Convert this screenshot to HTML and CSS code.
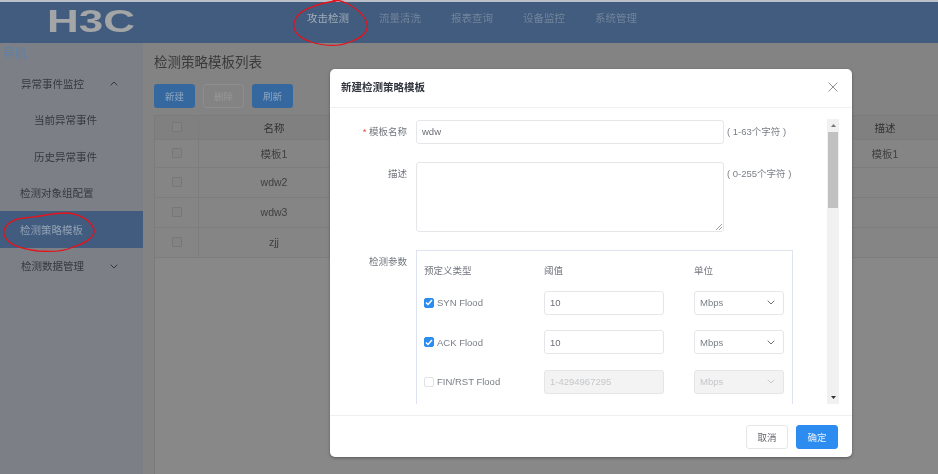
FILE: index.html
```html
<!DOCTYPE html>
<html lang="zh">
<head>
<meta charset="utf-8">
<title>检测策略模板</title>
<link rel="stylesheet" href="styles.css">
</head>
<body>
<div class="app">
  <header class="topbar">
    <svg class="logo" width="88" height="26" viewBox="0 0 88 26"><text x="0" y="24" textLength="88" lengthAdjust="spacingAndGlyphs" class="logo-text">H3C</text></svg>
    <nav class="mainnav">
      <span>攻击检测</span><span>流量清洗</span><span>报表查询</span><span>设备监控</span><span>系统管理</span>
    </nav>
  </header>
  <div class="main">
    <aside class="sidebar">
      <div class="side-title">导航</div>
      <div class="side-item lvl1">异常事件监控<svg class="chev" width="8" height="5" viewBox="0 0 8 5"><path d="M.7 4.3 4 1l3.3 3.3"/></svg></div>
      <div class="side-item lvl2">当前异常事件</div>
      <div class="side-item lvl2">历史异常事件</div>
      <div class="side-item lvl0">检测对象组配置</div>
      <div class="side-item lvl0 active">检测策略模板</div>
      <div class="side-item lvl1">检测数据管理<svg class="chev" width="8" height="5" viewBox="0 0 8 5"><path d="M.7.7 4 4 7.3.7"/></svg></div>
    </aside>
    <section class="content">
      <h1 class="page-title">检测策略模板列表</h1>
      <div class="toolbar">
        <span class="tbtn primary">新建</span><span class="tbtn disabled">删除</span><span class="tbtn primary">刷新</span>
      </div>
      <div class="table">
        <div class="tr th"><span class="c-check"><i class="tick"></i></span><span class="c-name">名称</span><span class="c-fill"></span><span class="c-desc">描述</span></div>
        <div class="tr r1"><span class="c-check"><i class="tick"></i></span><span class="c-name">模板1</span><span class="c-fill"></span><span class="c-desc">模板1</span></div>
        <div class="tr r2"><span class="c-check"><i class="tick"></i></span><span class="c-name">wdw2</span><span class="c-fill"></span><span class="c-desc"></span></div>
        <div class="tr r2"><span class="c-check"><i class="tick"></i></span><span class="c-name">wdw3</span><span class="c-fill"></span><span class="c-desc"></span></div>
        <div class="tr r2"><span class="c-check"><i class="tick"></i></span><span class="c-name">zjj</span><span class="c-fill"></span><span class="c-desc"></span></div>
      </div>
    </section>
  </div>
</div>

<div class="modal">
  <div class="modal-head">
    <span class="modal-title">新建检测策略模板</span>
    <svg class="close" width="10" height="10" viewBox="0 0 10 10"><path d="M.5.5l9 9M9.500.5l-9 9"/></svg>
  </div>
  <div class="modal-body">
    <form class="form">
      <div class="frow name-row">
        <label class="flabel"><em>*</em> 模板名称</label>
        <div class="finput">wdw</div>
        <span class="hint">( 1-63个字符 )</span>
      </div>
      <div class="frow desc-row">
        <label class="flabel">描述</label>
        <div class="ftext"><svg class="grip" width="7" height="7" viewBox="0 0 7 7"><path d="M1 7l6-6M4 7l3-3"/></svg></div>
        <span class="hint">( 0-255个字符 )</span>
      </div>
      <div class="frow param-row">
        <label class="flabel">检测参数</label>
        <div class="params">
          <div class="pgrid phead"><span>预定义类型</span><span>阈值</span><span>单位</span></div>
          <div class="pgrid">
            <span class="ck on"><i class="box"><svg width="8" height="7" viewBox="0 0 8 7"><path d="M1 3.500 3 5.500 7 1"/></svg></i>SYN Flood</span>
            <span class="pinput">10</span>
            <span class="pselect">Mbps<svg width="8" height="5" viewBox="0 0 8 5"><path d="M.7.7 4 4 7.300.7"/></svg></span>
          </div>
          <div class="pgrid">
            <span class="ck on"><i class="box"><svg width="8" height="7" viewBox="0 0 8 7"><path d="M1 3.500 3 5.500 7 1"/></svg></i>ACK Flood</span>
            <span class="pinput">10</span>
            <span class="pselect">Mbps<svg width="8" height="5" viewBox="0 0 8 5"><path d="M.7.7 4 4 7.300.7"/></svg></span>
          </div>
          <div class="pgrid">
            <span class="ck"><i class="box"></i>FIN/RST Flood</span>
            <span class="pinput off">1-4294967295</span>
            <span class="pselect off">Mbps<svg width="8" height="5" viewBox="0 0 8 5"><path d="M.7.7 4 4 7.300.7"/></svg></span>
          </div>
        </div>
      </div>
    </form>
    <div class="scrollbar">
      <svg class="arrow" width="5" height="3" viewBox="0 0 5 3"><path d="M2.500 0 5 3H0z"/></svg>
      <div class="thumb"></div>
      <svg class="arrow down" width="5" height="3" viewBox="0 0 5 3"><path d="M0 0h5L2.500 3z"/></svg>
    </div>
  </div>
  <div class="modal-foot">
    <span class="mbtn">取消</span><span class="mbtn ok">确定</span>
  </div>
</div>

<svg class="marks" width="938" height="474" viewBox="0 0 938 474">
  <path d="M336 1C320 3 301 9 296 18 290 28 296 37 311 42 324 46 338 47 350 42 361 38 369 33 367 24 365 15 356 8 346 3 342 1 338 0 333 0"/>
  <path d="M40 216C50 214 60 213 67 213 78 214 90 219 94 229 96 237 84 244 73 247 63 252 50 252 38 251 24 249 8 246 4 235 2 226 12 219 24 218 30 217 35 217 40 216"/>
</svg>
</body>
</html>
```
FILE: styles.css
```css
* { box-sizing: border-box; }
html, body { margin: 0; height: 100%; }
body {
  width: 938px;
  height: 474px;
  overflow: hidden;
  position: relative;
  background: #808080;
  font-family: "Liberation Sans", "Noto Sans CJK SC", sans-serif;
  font-size: 10.5px;
  color: #5b5f66;
}
.app { height: 474px; display: flex; flex-direction: column; border-top: 2px solid #b9c0c8; filter: blur(.35px); }
.topbar { height: 41px; background: #415c7e; display: flex; flex: none; align-items: flex-start; }
.logo { margin: 6px 0 0 47px; flex: none; overflow: visible; }
.logo-text { font: bold 30.500px "Liberation Sans", sans-serif; fill: #a3a5a6; }
.mainnav { margin: 9px 0 0 172px; display: flex; gap: 30px; color: #73849b; line-height: 14px; }
.mainnav span { width: 42px; white-space: nowrap; }
.mainnav span:first-child { color: #a3adb9; }
.main { flex: 1; display: flex; min-height: 0; }

.sidebar { width: 143px; flex: none; background: #7c8086; color: #35383d; }
.side-title { color: #5e7fa8; font-size: 12px; line-height: 16px; padding: 3px 0 0 3px; height: 22px; }
.side-item { height: 36.500px; display: flex; align-items: center; position: relative; white-space: nowrap; }
.side-item.lvl1 { padding-left: 21px; }
.side-item.lvl2 { padding-left: 34px; }
.side-item.lvl0 { padding-left: 20px; }
.side-item.active { background: #415c7e; color: #92a1b4; }
.chev { position: absolute; left: 110px; top: 16px; fill: none; stroke: #33363a; stroke-width: 1; }

.content { flex: 1; min-width: 0; padding: 10px 0 0 11px; background: #838383; color: #3f3f3f; display: flex; flex-direction: column; }
.page-title { margin: 0; font-size: 13.500px; font-weight: 400; line-height: 20px; color: #3a3a3a; }
.toolbar { display: flex; gap: 8px; margin-top: 11px; }
.tbtn { width: 41px; height: 24px; border-radius: 3px; display: flex; align-items: center; justify-content: center; font-size: 9.500px; }
.tbtn.primary { background: #35689f; color: #8ea6c0; }
.tbtn.disabled { border: 1px solid #8d8d8d; color: #979797; }
.table { margin-top: 7px; flex: 1; border-top: 1px solid #7b7b7b; border-left: 1px solid #7b7b7b; background: #888; }
.tr { display: flex; align-items: stretch; border-bottom: 1px solid #7d7d7d; background: #858585; }
.tr.th { height: 24px; background: #808080; color: #323232; }
.tr.r1 { height: 28px; }
.tr.r2 { height: 30px; }
.tr span { display: flex; align-items: center; justify-content: center; padding-bottom: 1px; }
.c-check { width: 44px; border-right: 1px solid #7d7d7d; }
.c-name { width: 150px; }
.c-fill { flex: 1; }
.c-desc { width: 106px; }
.tick { width: 10px; height: 10px; border: 1px solid #777; border-radius: 1px; background: #838383; }

.modal {
  position: absolute;
  left: 330px;
  top: 69px;
  width: 522px;
  height: 388px;
  background: #fff;
  border-radius: 5px;
  box-shadow: 0 1px 3px rgba(0,0,0,.35);
  display: flex;
  flex-direction: column;
  filter: blur(.35px);
}
.modal-head { height: 39px; flex: none; border-bottom: 1px solid #eef0f2; display: flex; align-items: center; justify-content: space-between; padding: 0 14px 3px 11px; }
.modal-title { font-size: 10.500px; font-weight: 700; color: #30343c; }
.close { fill: none; stroke: #8e9196; stroke-width: 1; }
.modal-body { height: 307px; flex: none; display: flex; align-items: flex-start; padding-top: 12px; position: relative; overflow: hidden; }
.form { width: 497px; height: 284px; flex: none; overflow: hidden; color: #6a6f78; }
.frow { display: flex; align-items: flex-start; }
.flabel { width: 77px; text-align: right; flex: none; font-size: 9.500px; line-height: 24px; color: #71757d; }
.flabel em { color: #ef4b3c; font-style: normal; }
.finput { margin-left: 9px; width: 308px; height: 24px; border: 1px solid #e4e6e9; border-radius: 3px; line-height: 22px; padding-left: 5px; color: #6b6e75; font-size: 9.500px; flex: none; }
.ftext { margin-left: 9px; width: 308px; height: 70px; border: 1px solid #e4e6e9; border-radius: 3px; position: relative; flex: none; }
.grip { position: absolute; right: 1px; bottom: 1px; fill: none; stroke: #777; stroke-width: .7; }
.hint { margin-left: 3px; line-height: 24px; font-size: 9.500px; color: #7a7e86; white-space: nowrap; }
.desc-row { margin-top: 18px; }
.param-row { margin-top: 18px; }
.params { margin-left: 9px; width: 377px; height: 160px; border: 1px solid #dfe3f0; border-bottom: 0; padding: 9px 7px 0; flex: none; }
.pgrid { display: grid; grid-template-columns: 120px 150px 90px; align-items: center; height: 39.500px; }
.phead { height: 20px; align-items: center; font-size: 9.500px; color: #72767e; margin-bottom: 3px; }
.ck { display: flex; align-items: center; gap: 3px; font-size: 9.500px; color: #7a7e86; }
.box { width: 10px; height: 10px; border: 1px solid #e0e2e5; border-radius: 2px; display: flex; align-items: center; justify-content: center; flex: none; }
.ck.on .box { background: #2d8cf0; border-color: #2d8cf0; }
.box svg { fill: none; stroke: #fff; stroke-width: 1.500; }
.pinput, .pselect { height: 24px; border: 1px solid #e4e6e9; border-radius: 3px; display: flex; align-items: center; padding-left: 5px; color: #6b6e75; font-size: 9.500px; }
.pinput { width: 120px; }
.pselect { width: 90px; justify-content: space-between; padding-right: 8px; color: #7a7e86; }
.pselect svg { fill: none; stroke: #6a6e75; stroke-width: 1; }
.off { background: #f3f3f3; color: #c5c7ca; }
.pselect.off { color: #c5c7ca; }
.pselect.off svg { stroke: #c5c7ca; }
.scrollbar { width: 12px; height: 285px; margin-top: -1px; background: #f1f1f1; display: flex; flex-direction: column; align-items: center; flex: none; position: relative; }
.arrow { fill: #777; margin-top: 5px; flex: none; }
.arrow.down { fill: #333; margin-top: auto; margin-bottom: 5px; }
.thumb { width: 10px; height: 76px; background: #c1c1c1; margin-top: 5px; flex: none; }
.modal-foot { flex: 1; border-top: 1px solid #eef0f2; display: flex; justify-content: flex-end; gap: 8px; padding: 9px 14px 0 0; }
.mbtn { width: 42px; height: 24px; border: 1px solid #e4e6e9; border-radius: 3px; display: flex; align-items: center; justify-content: center; font-size: 9.500px; color: #63666d; }
.mbtn.ok { background: #2d8cf0; border-color: #2d8cf0; color: #e6f1fd; }

.marks { position: absolute; left: 0; top: 0; pointer-events: none; }
.marks path { fill: none; stroke: #e3141c; stroke-width: 1.300; stroke-linecap: round; }
```
